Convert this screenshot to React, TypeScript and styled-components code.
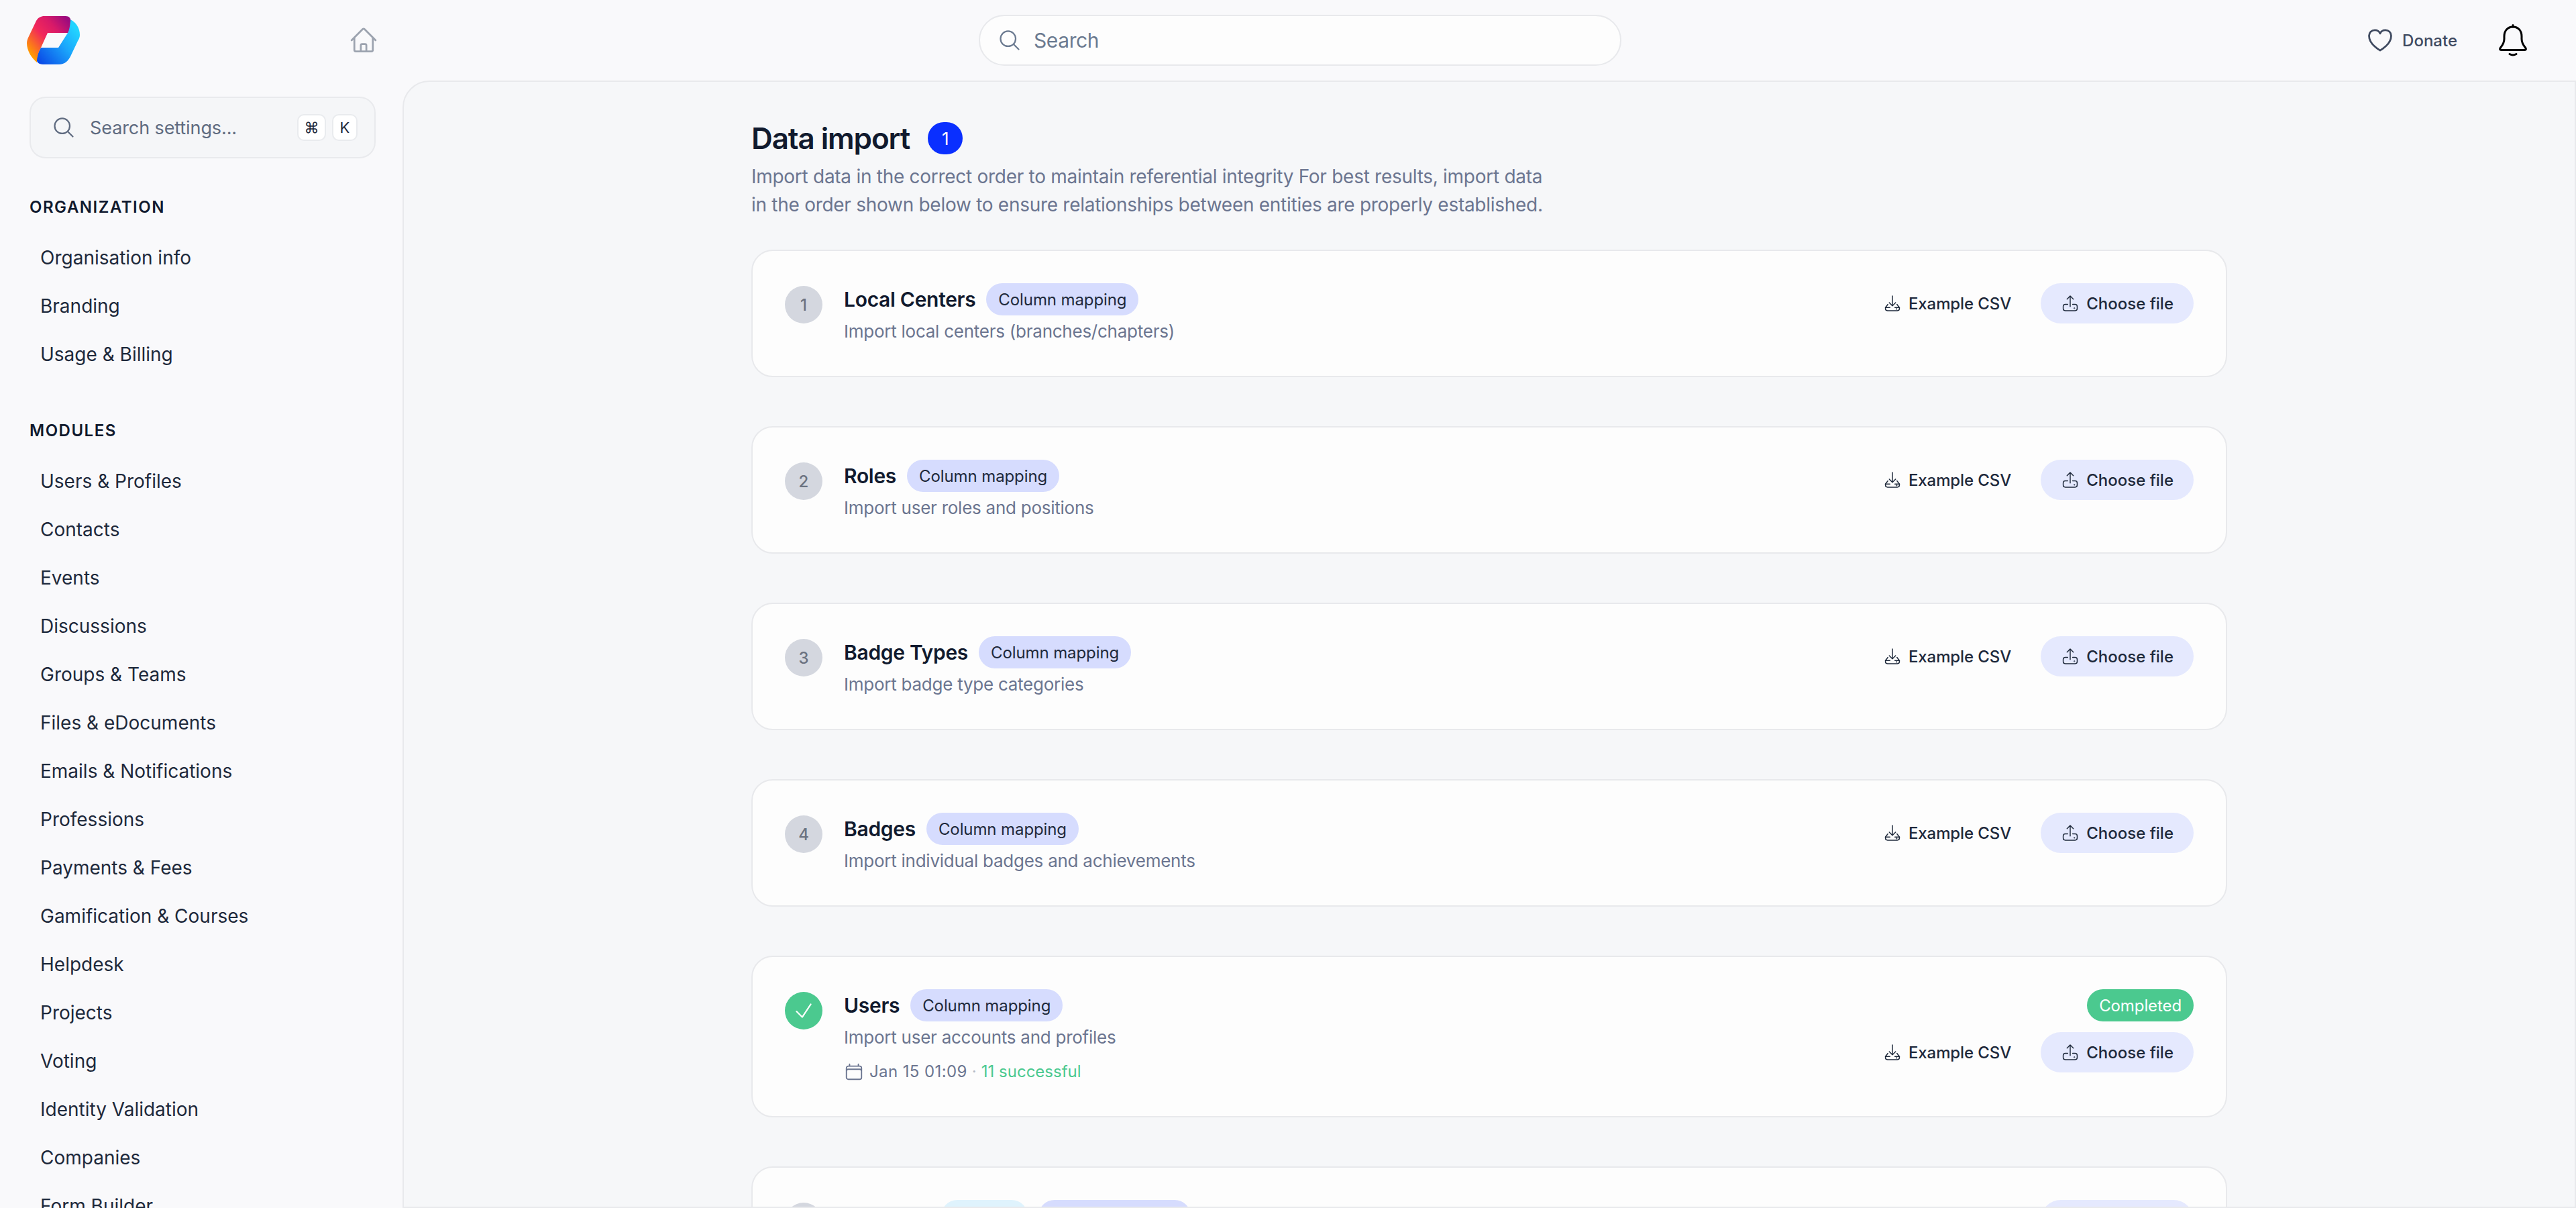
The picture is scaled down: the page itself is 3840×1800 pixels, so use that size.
import { HiOutlineCalendar, HiOutlineCheck, HiOutlineHeart, HiOutlineHome, HiOutlineMagnifyingGlass } from "react-icons/hi2";
import styled, { createGlobalStyle } from "styled-components";

const organizationLinks = ["Organisation info", "Branding", "Usage & Billing"];

const moduleLinks = [
  "Users & Profiles",
  "Contacts",
  "Events",
  "Discussions",
  "Groups & Teams",
  "Files & eDocuments",
  "Emails & Notifications",
  "Professions",
  "Payments & Fees",
  "Gamification & Courses",
  "Helpdesk",
  "Projects",
  "Voting",
  "Identity Validation",
  "Companies",
  "Form Builder",
];

type ImportStep = {
  step: number;
  name: string;
  about: string;
  optional?: boolean;
  done?: boolean;
};

const importSteps: ImportStep[] = [
  { step: 1, name: "Local Centers", about: "Import local centers (branches/chapters)" },
  { step: 2, name: "Roles", about: "Import user roles and positions" },
  { step: 3, name: "Badge Types", about: "Import badge type categories" },
  { step: 4, name: "Badges", about: "Import individual badges and achievements" },
  { step: 5, name: "Users", about: "Import user accounts and profiles", done: true },
  { step: 6, name: "Contacts", about: "Import contacts", optional: true },
];

const Logo = () => (
  <svg width="80" height="72" viewBox="10 10 80 72">
    <defs>
      <linearGradient id="logoWarm" x1="12%" y1="85%" x2="95%" y2="10%">
        <stop offset="0%" stopColor="#ff9a00" />
        <stop offset="42%" stopColor="#f2285a" />
        <stop offset="70%" stopColor="#d91a68" />
        <stop offset="100%" stopColor="#9c0b7e" />
      </linearGradient>
      <linearGradient id="logoCold" x1="5%" y1="95%" x2="90%" y2="20%">
        <stop offset="0%" stopColor="#0a48e6" />
        <stop offset="60%" stopColor="#1ba6fb" />
        <stop offset="100%" stopColor="#22d4ff" />
      </linearGradient>
    </defs>
    <path
      fill="url(#logoCold)"
      d="M75 15C84 20 89 28 89 38C89 41 88 44 86 47L76 68C72 77 66 82 58 82H34C28 82 23 78 25 72C26 66 28 62 31 57H57L71 35C73 29 74 22 75 15Z"
    />
    <path
      fill="url(#logoWarm)"
      d="M36 10H68C73 10 76 13 75 18C74 24 74 30 71 35H41L31 57C28 62 25 70 25 79C17 72 10 62 10 50C10 46 12 42 14 38L24 17C27 12 31 10 36 10Z"
    />
  </svg>
);

const BellIcon = () => (
  <svg width="42" height="48" viewBox="0 0 42 48" fill="none" stroke="#000" strokeWidth="3" strokeLinecap="round" strokeLinejoin="round">
    <path d="M21 1.5V4" />
    <path d="M21 4C13 4 8 10 8 18V22C8 28 5 32 2.5 35C1 37 1.5 38.5 3.5 38.5H38.5C40.5 38.5 41 37 39.5 35C37 32 34 28 34 22V18C34 10 29 4 21 4Z" />
    <path d="M16 44.5Q21 47.5 26 44.5" />
  </svg>
);

const DownloadIcon = () => (
  <svg width="24" height="24" viewBox="0 0 22 23" fill="none" stroke="currentColor" strokeWidth="1.4" strokeLinecap="round" strokeLinejoin="round">
    <path d="M11 1V15M6.5 10.5L11 15L15.5 10.5" />
    <path d="M4.5 13L1 17.5V19Q1 22 4 22H18Q21 22 21 19V17.5L17.5 13" />
    <path d="M1 17.5H7.5M14.5 17.5H21" />
    <circle cx="17" cy="19.6" r="0.35" />
  </svg>
);

const UploadIcon = () => (
  <svg width="24" height="24" viewBox="0 0 22 23" fill="none" stroke="currentColor" strokeWidth="1.4" strokeLinecap="round" strokeLinejoin="round">
    <path d="M11 16V1M6.5 5.5L11 1L15.5 5.5" />
    <path d="M7.5 13H4Q1 13 1 16V19Q1 22 4 22H18Q21 22 21 19V16Q21 13 18 13H14.5" />
    <circle cx="17" cy="18.5" r="0.35" />
  </svg>
);

const App = () => {
  return (
    <Page>
      <GlobalStyle />
      <TopBar>
        <Brand>
          <Logo />
          <HomeLink>
            <HiOutlineHome size={44} />
          </HomeLink>
        </Brand>
        <GlobalSearch>
          <HiOutlineMagnifyingGlass size={36} />
          <span>Search</span>
        </GlobalSearch>
        <Actions>
          <Donate>
            <HiOutlineHeart size={44} />
            Donate
          </Donate>
          <BellIcon />
        </Actions>
      </TopBar>
      <Body>
        <Sidebar>
          <SettingsSearch>
            <HiOutlineMagnifyingGlass size={36} />
            <SettingsHint>Search settings...</SettingsHint>
            <Kbd $wide>⌘</Kbd>
            <Kbd>K</Kbd>
          </SettingsSearch>
          <NavSection>
            <NavHeading>ORGANIZATION</NavHeading>
            <NavList>
              {organizationLinks.map((link) => (
                <NavLink key={link}>{link}</NavLink>
              ))}
            </NavList>
          </NavSection>
          <NavSection>
            <NavHeading>MODULES</NavHeading>
            <NavList>
              {moduleLinks.map((link) => (
                <NavLink key={link}>{link}</NavLink>
              ))}
            </NavList>
          </NavSection>
        </Sidebar>
        <Panel>
          <Content>
            <TitleRow>
              <Title>Data import</Title>
              <CountBadge>1</CountBadge>
            </TitleRow>
            <Intro>
              Import data in the correct order to maintain referential integrity For best results, import data in the
              order shown below to ensure relationships between entities are properly established.
            </Intro>
            <StepList>
              {importSteps.map((item) => (
                <StepCard key={item.step}>
                  <StepMark $done={item.done}>{item.done ? <HiOutlineCheck size={34} /> : item.step}</StepMark>
                  <StepInfo>
                    <StepHeader>
                      <StepName>{item.name}</StepName>
                      {item.optional && <Pill $tone="cyan">Optional</Pill>}
                      <Pill $tone="indigo">Column mapping</Pill>
                    </StepHeader>
                    <StepAbout>{item.about}</StepAbout>
                    {item.done && (
                      <StepMeta>
                        <HiOutlineCalendar size={30} />
                        <MetaDate>Jan 15 01:09</MetaDate>
                        <Dot>·</Dot>
                        <Success>11 successful</Success>
                      </StepMeta>
                    )}
                  </StepInfo>
                  <StepActions>
                    {item.done && <Pill $tone="green">Completed</Pill>}
                    <ButtonRow>
                      <ExampleLink>
                        <DownloadIcon />
                        Example CSV
                      </ExampleLink>
                      <ChooseButton>
                        <UploadIcon />
                        Choose file
                      </ChooseButton>
                    </ButtonRow>
                  </StepActions>
                </StepCard>
              ))}
            </StepList>
          </Content>
        </Panel>
      </Body>
    </Page>
  );
};

export default App;

const GlobalStyle = createGlobalStyle`
  * {
    box-sizing: border-box;
  }
  html, body {
    margin: 0;
    height: 100%;
    overflow: hidden;
    background: #f9f9fb;
    font-family: Inter, "Noto Sans", sans-serif;
  }
`;

const Page = styled.div`
  height: 1800px;
  display: flex;
  flex-direction: column;
  overflow: hidden;
  background: #f9f9fb;
`;

const TopBar = styled.header`
  flex: 0 0 120px;
  display: flex;
  align-items: center;
`;

const Brand = styled.div`
  flex: 0 0 600px;
  padding: 0 36px 0 40px;
  display: flex;
  align-items: center;
  justify-content: space-between;
`;

const HomeLink = styled.div`
  display: flex;
  color: #9ca3af;
`;

const GlobalSearch = styled.div`
  width: 958px;
  height: 76px;
  margin-left: 859px;
  padding: 0 26px;
  display: flex;
  align-items: center;
  gap: 18px;
  border: 2px solid #e8e9ec;
  border-radius: 38px;
  background: #fdfdfd;
  color: #6b7a90;
  font-size: 30px;
  letter-spacing: -0.4px;

  svg {
    flex: none;
  }
`;

const Actions = styled.div`
  margin-left: auto;
  padding-right: 73px;
  display: flex;
  align-items: center;
  gap: 62px;
`;

const Donate = styled.div`
  display: flex;
  align-items: center;
  gap: 11px;
  color: #3f4a60;
  font-size: 24px;
  font-weight: 500;
`;

const Body = styled.div`
  flex: 1;
  min-height: 0;
  display: flex;
`;

const Sidebar = styled.aside`
  flex: 0 0 600px;
  padding: 24px 40px 0 44px;
  display: flex;
  flex-direction: column;
  overflow: hidden;
`;

const SettingsSearch = styled.div`
  flex: none;
  height: 92px;
  margin-bottom: 55px;
  padding: 0 25px 0 31px;
  display: flex;
  align-items: center;
  gap: 9px;
  border: 2px solid #e9eaed;
  border-radius: 24px;
  background: #f5f6f8;
  color: #5f6b80;
`;

const SettingsHint = styled.span`
  flex: 1;
  margin-left: 12px;
  font-size: 27px;
  letter-spacing: -0.1px;
  color: #5f6b80;
`;

const Kbd = styled.kbd<{ $wide?: boolean }>`
  width: ${(p) => (p.$wide ? "43px" : "38px")};
  height: 40px;
  display: flex;
  align-items: center;
  justify-content: center;
  border: 2px solid #e9ebee;
  border-radius: 10px;
  background: #fff;
  color: #1e293b;
  font-family: Inter, "DejaVu Sans", sans-serif;
  font-size: 22px;
`;

const NavSection = styled.nav`
  flex: none;
  margin-bottom: 60px;
`;

const NavHeading = styled.h3`
  margin: 0 0 21px;
  height: 36px;
  line-height: 36px;
  color: #111a2e;
  font-size: 24px;
  font-weight: 600;
  letter-spacing: 1.5px;
`;

const NavList = styled.div`
  display: flex;
  flex-direction: column;
`;

const NavLink = styled.a`
  height: 72px;
  padding-left: 16px;
  display: flex;
  align-items: center;
  color: #1e293b;
  font-size: 28px;
`;

const Panel = styled.main`
  flex: 1;
  min-width: 0;
  overflow: hidden;
  border: 2px solid #e8e9ec;
  border-top-left-radius: 40px;
  background: #f6f7f9;
`;

const Content = styled.div`
  width: 2200px;
  margin: 0 auto;
  padding-top: 60px;
`;

const TitleRow = styled.div`
  height: 48px;
  display: flex;
  align-items: center;
  gap: 27px;
`;

const Title = styled.h1`
  margin: 0;
  color: #111a2e;
  font-size: 44px;
  font-weight: 600;
  letter-spacing: -1.1px;
`;

const CountBadge = styled.span`
  width: 52px;
  height: 48px;
  display: flex;
  align-items: center;
  justify-content: center;
  border-radius: 24px;
  background: #0a2fff;
  color: #fff;
  font-size: 26px;
`;

const Intro = styled.p`
  max-width: 1200px;
  margin: 12px 0 46px;
  color: #6b7590;
  font-size: 28px;
  line-height: 42px;
  letter-spacing: -0.28px;
`;

const StepList = styled.div`
  display: flex;
  flex-direction: column;
  gap: 73px;
`;

const StepCard = styled.section`
  flex: none;
  padding: 48px 48px 46px;
  display: flex;
  align-items: flex-start;
  gap: 32px;
  border: 2px solid #e8e9ec;
  border-radius: 32px;
  background: #fdfdfd;
`;

const StepMark = styled.div<{ $done?: boolean }>`
  flex: none;
  width: 56px;
  height: 56px;
  margin-top: 4px;
  display: flex;
  align-items: center;
  justify-content: center;
  border-radius: 50%;
  background: ${(p) => (p.$done ? "#4bc98f" : "#d4d7df")};
  color: ${(p) => (p.$done ? "#fff" : "#6b7280")};
  font-size: 24px;
  font-weight: 500;
`;

const StepInfo = styled.div`
  flex: 1;
  min-width: 0;
`;

const StepHeader = styled.div`
  height: 48px;
  display: flex;
  align-items: center;
  gap: 16px;
`;

const StepName = styled.h2`
  margin: 0;
  color: #111a2e;
  font-size: 30px;
  font-weight: 600;
  letter-spacing: -0.3px;
`;

const pillTones = {
  indigo: { bg: "#d6dcfe", fg: "#1e293b" },
  cyan: { bg: "#dff3fd", fg: "#1e293b" },
  green: { bg: "#4bc98f", fg: "#fff" },
};

const Pill = styled.span<{ $tone: keyof typeof pillTones }>`
  height: 48px;
  padding: 0 18px;
  display: inline-flex;
  align-items: center;
  border-radius: 24px;
  background: ${(p) => pillTones[p.$tone].bg};
  color: ${(p) => pillTones[p.$tone].fg};
  font-size: 24px;
  letter-spacing: -0.1px;
`;

const StepAbout = styled.p`
  margin: 4px 0 0;
  color: #6b7590;
  font-size: 26px;
  line-height: 40px;
  letter-spacing: -0.25px;
`;

const StepMeta = styled.div`
  margin-top: 11px;
  display: flex;
  align-items: center;
  gap: 7px;
  color: #6b7590;
  font-size: 24px;
  line-height: 40px;
`;

const MetaDate = styled.span`
  margin-left: 1px;
  letter-spacing: 0.4px;
`;

const Dot = styled.span`
  color: #b4bac6;
`;

const Success = styled.span`
  color: #4bc98f;
`;

const StepActions = styled.div`
  flex: none;
  display: flex;
  flex-direction: column;
  align-items: flex-end;
  gap: 16px;
`;

const ButtonRow = styled.div`
  display: flex;
  align-items: center;
  gap: 44px;
`;

const ExampleLink = styled.div`
  display: flex;
  align-items: center;
  gap: 12px;
  color: #1e293b;
  font-size: 24px;
  font-weight: 500;
  letter-spacing: -0.1px;
`;

const ChooseButton = styled.div`
  height: 60px;
  padding: 0 30px 0 32px;
  display: flex;
  align-items: center;
  gap: 12px;
  border-radius: 30px;
  background: #e5e9fe;
  color: #1e293b;
  font-size: 24px;
  font-weight: 500;
`;
